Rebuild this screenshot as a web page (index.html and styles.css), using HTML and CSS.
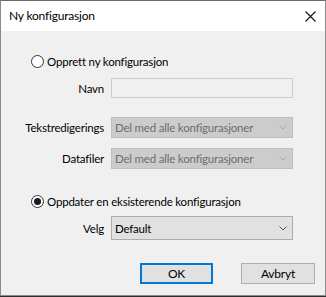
FILE: index.html
```html
<!DOCTYPE html>
<html lang="nb">
<head>
    <meta charset="UTF-8">
    <title>Ny konfigurasjon</title>
    <link rel="stylesheet" href="styles.css">
</head>
<body>
    <div class="vindu">
        <div class="tittel">
            <span class="tittel-tekst">Ny konfigurasjon</span>
            <svg class="lukk" width="11" height="11" viewBox="0 0 11 11">
                <path d="M0.5 0.5 L10.5 10.5 M10.5 0.5 L0.5 10.5" stroke="#111" stroke-width="1.1" fill="none"/>
            </svg>
        </div>

        <div class="innhold">
            <label class="valg valg-ny">
                <input type="radio" name="modus">
                <span>Opprett ny konfigurasjon</span>
            </label>

            <div class="felt felt-navn">
                <span class="etikett">Navn</span>
                <div class="tekstboks"></div>
            </div>

            <div class="felt felt-tekst">
                <span class="etikett">Tekstredigerings</span>
                <div class="nedtrekk av">
                    <span>Del med alle konfigurasjoner</span>
                    <svg width="8" height="5" viewBox="0 0 8 5"><path d="M0.5 0.5 L4 4 L7.5 0.5" stroke="#a9a9a9" fill="none"/></svg>
                </div>
            </div>

            <div class="felt felt-data">
                <span class="etikett">Datafiler</span>
                <div class="nedtrekk av">
                    <span>Del med alle konfigurasjoner</span>
                    <svg width="8" height="5" viewBox="0 0 8 5"><path d="M0.5 0.5 L4 4 L7.5 0.5" stroke="#a9a9a9" fill="none"/></svg>
                </div>
            </div>

            <label class="valg valg-oppdater">
                <input type="radio" name="modus" checked>
                <span>Oppdater en eksisterende konfigurasjon</span>
            </label>

            <div class="felt felt-velg">
                <span class="etikett">Velg</span>
                <div class="nedtrekk">
                    <span>Default</span>
                    <svg width="8" height="5" viewBox="0 0 8 5"><path d="M0.5 0.5 L4 4 L7.5 0.5" stroke="#555" fill="none"/></svg>
                </div>
            </div>

            <div class="knapper">
                <button class="knapp standard">OK</button>
                <button class="knapp">Avbryt</button>
            </div>
        </div>
    </div>
</body>
</html>
```

FILE: styles.css
```css
/* nullstill */
*{
    margin: 0;
    padding: 0;
    box-sizing: border-box;
}
body{
    background-color: #2e2e2e;
    font-family: Lato, "Liberation Sans", sans-serif;
    font-size: 11.5px;
    letter-spacing: -0.2px;
    color: #000;
    white-space: nowrap;
}
.vindu{
    width: 326px;
    height: 296px;
    background-color: #f0f0f0;
    border: 1px solid #8a8a8a;
    border-top-color: #6a6a6a;
    display: flex;
    flex-direction: column;
}
.tittel{
    height: 30px;
    background-color: #fff;
    display: flex;
    align-items: center;
    justify-content: space-between;
    padding: 0 9px 0 8px;
    flex-shrink: 0;
}
.tittel-tekst{
    font-size: 12px;
    padding-bottom: 1px;
}
.lukk{
    margin-top: 1px;
}
.innhold{
    padding-top: 23px;
    display: flex;
    flex-direction: column;
}
.valg{
    display: flex;
    align-items: center;
    height: 15px;
    padding-left: 30px;
    gap: 3px;
}
.valg input{
    appearance: none;
    width: 13px;
    height: 13px;
    border: 1px solid #333;
    border-radius: 50%;
    background-color: #fff;
    display: grid;
    place-content: center;
}
.valg input:checked::after{
    content: "";
    width: 7px;
    height: 7px;
    border-radius: 50%;
    background-color: #1a1a1a;
}
.felt{
    display: grid;
    grid-template-columns: 103px 182px;
    column-gap: 7px;
    align-items: center;
}
.etikett{
    text-align: right;
}
.felt-navn{ margin-top: 9px; }
.felt-tekst{ margin-top: 19px; }
.felt-data{ margin-top: 10px; }
.valg-oppdater{ margin-top: 25px; }
.felt-velg{ margin-top: 7px; }

.tekstboks{
    height: 20px;
    border: 1px solid #cccccc;
    background-color: #f0f0f0;
}
.nedtrekk{
    height: 24px;
    border: 1px solid #adadad;
    background-color: #e1e1e1;
    display: flex;
    align-items: center;
    justify-content: space-between;
    padding: 0 5px 0 3px;
    overflow: hidden;
}
.nedtrekk.av{
    height: 21px;
    background-color: #cccccc;
    border-color: #bfbfbf;
    color: #6d6d6d;
}
.knapper{
    display: flex;
    justify-content: flex-end;
    gap: 28px;
    margin-top: 23px;
    padding-right: 10px;
}
.knapp{
    width: 74px;
    height: 21px;
    font-family: inherit;
    font-size: 12px;
    letter-spacing: inherit;
    background-color: #e1e1e1;
    border: 1px solid #adadad;
    color: #000;
}
.knapp.standard{
    width: 73px;
    border: 2px solid #0078d7;
}
```
